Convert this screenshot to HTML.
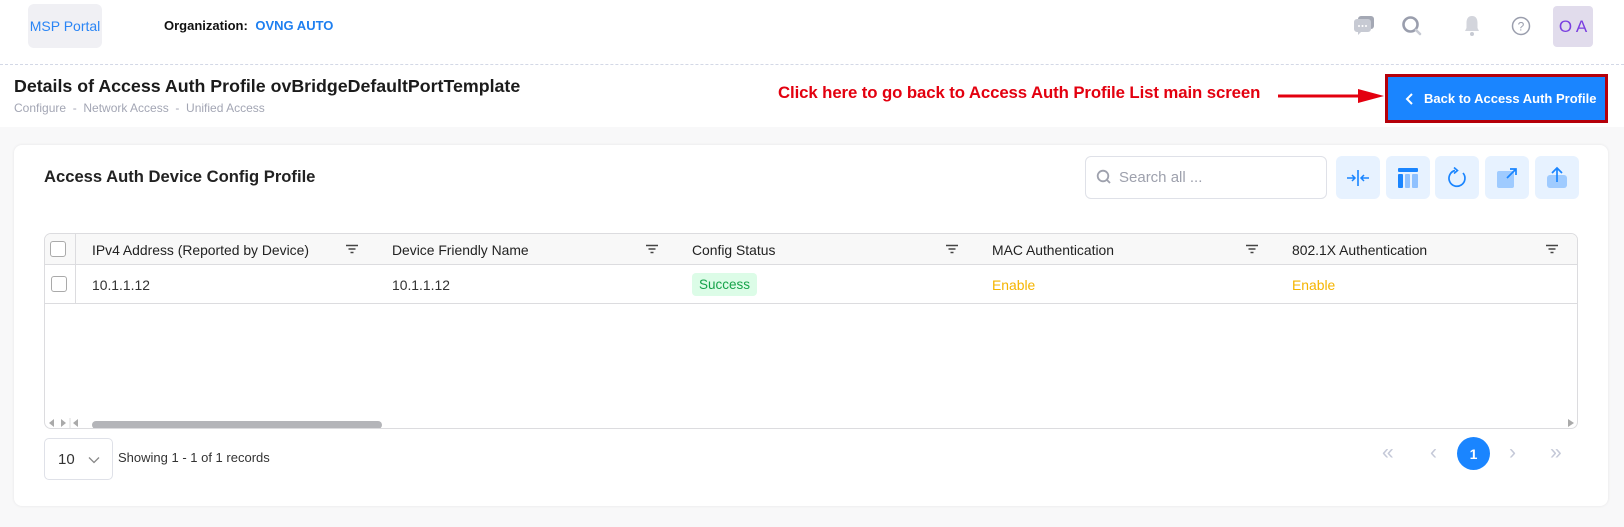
<!DOCTYPE html>
<html><head><meta charset="utf-8"><style>
*{box-sizing:border-box;margin:0;padding:0}
body{width:1624px;height:527px;background:#f8f8f9;font-family:"Liberation Sans",sans-serif;position:relative;overflow:hidden;color:#222}
.abs{position:absolute}
.top{left:0;top:0;width:1624px;height:127px;background:#fff}
.dash{left:0;top:64px;width:1624px;border-top:1px dashed #d3d8e6}
.msp{left:28px;top:4px;width:74px;height:44px;background:#f0f0f4;border-radius:6px;color:#2a85f5;font-size:14px;display:flex;align-items:center;justify-content:center}
.org{left:164px;top:18px;font-size:13px;font-weight:bold;color:#111}
.org span{color:#1e7ff0;margin-left:4px}
.title{left:14px;top:76px;font-size:17.8px;font-weight:bold;color:#1b1b1b}
.bc{left:14px;top:101px;font-size:12px;color:#a3a6b4}
.red{left:778px;top:83px;font-size:16.8px;font-weight:bold;color:#e3000f;white-space:nowrap;letter-spacing:-0.1px}
.rbox{left:1385px;top:74px;width:223px;height:49px;border:3px solid #b5000a}
.bbtn{left:1388px;top:77px;width:217px;height:43px;background:#1a85ff;color:#fff;font-size:13px;font-weight:bold;display:flex;align-items:center;padding-left:16px}
.card{left:14px;top:145px;width:1594px;height:361px;background:#fff;border-radius:8px;box-shadow:0 0 3px rgba(0,0,0,.08)}
.ctitle{left:44px;top:167px;font-size:16.6px;font-weight:bold;color:#222}
.search{left:1085px;top:156px;width:242px;height:43px;border:1px solid #dfe1e8;border-radius:6px;font-size:15px;color:#9ea1ad;padding:12px 0 0 33px}
.ib{top:156px;width:44px;height:43px;background:#e7f2ff;border-radius:6px;display:flex;align-items:center;justify-content:center}
.tbl{left:44px;top:233px;width:1534px;height:196px;border:1px solid #dcdcdf;border-radius:7px;overflow:hidden}
.thead{left:0;top:0;width:100%;height:31px;background:#f8f8f8;border-bottom:1px solid #dcdcdf}
.row{left:0;top:31px;width:100%;height:39px;border-bottom:1px solid #dcdcdf}
.cb{width:16px;height:16px;border:1px solid #aaa;border-radius:3px;background:#fff}
.vsep{left:30px;top:0;height:70px;border-left:1px solid #dcdcdf}
.th{top:8px;font-size:13.9px;color:#222}
.td{top:43px;font-size:13.9px;color:#333}
.fl{top:10px}
.badge{left:647px;top:39px;height:23px;line-height:23px;background:#dcfce7;color:#16a34a;border-radius:4px;padding:0 7px;font-size:13.5px}
.scroll{left:47px;top:187px;width:290px;height:8px;background:#b4b5b9;border-radius:4px}
.sel{left:44px;top:438px;width:69px;height:42px;border:1px solid #dfe1e8;border-radius:5px;font-size:15px;color:#333;padding:12px 0 0 13px}
.show{left:118px;top:450px;font-size:13px;color:#333}
.pg{top:441px;font-size:21px;color:#c5c9d8}
.one{left:1457px;top:437px;width:33px;height:33px;border-radius:50%;background:#1a85ff;color:#fff;font-weight:bold;font-size:14px;display:flex;align-items:center;justify-content:center}
</style></head><body>
<div class="abs top"></div>
<div class="abs dash"></div>
<div class="abs msp">MSP Portal</div>
<div class="abs org">Organization: <span>OVNG AUTO</span></div>
<svg class="abs" style="left:1352px;top:14px" width="24" height="24" viewBox="0 0 24 24"><rect x="6" y="2" width="16" height="13" rx="3" fill="#a4a8b4"/><path d="M2 8a3 3 0 0 1 3-3h11a3 3 0 0 1 3 3v7a3 3 0 0 1-3 3H9l-3 3v-3H5a3 3 0 0 1-3-3z" fill="#c7cad3"/><circle cx="7" cy="12" r="1" fill="#fff"/><circle cx="10.5" cy="12" r="1" fill="#fff"/><circle cx="14" cy="12" r="1" fill="#fff"/></svg>
<svg class="abs" style="left:1401px;top:15px" width="22" height="22" viewBox="0 0 22 22"><circle cx="9.5" cy="9.5" r="7" fill="none" stroke="#9a9ead" stroke-width="2.6"/><path d="M15 15l4 4" stroke="#c7cad3" stroke-width="2.6" stroke-linecap="round"/></svg>
<svg class="abs" style="left:1461px;top:14px" width="22" height="24" viewBox="0 0 22 24"><path d="M11 2c-4 0-5.5 3-5.5 7v5L4 17h14l-1.5-3V9c0-4-1.5-7-5.5-7z" fill="#d3d5dc"/><circle cx="11" cy="20" r="2" fill="#c7cad3"/></svg>
<svg class="abs" style="left:1511px;top:16px" width="20" height="20" viewBox="0 0 20 20"><circle cx="10" cy="10" r="8.5" fill="none" stroke="#9a9ead" stroke-width="1.5"/><text x="10" y="14.5" font-size="12" text-anchor="middle" fill="#9a9ead" font-family="Liberation Sans">?</text></svg>
<div class="abs" style="left:1553px;top:6px;width:40px;height:41px;background:#e1dcec;border-radius:4px;color:#7a3fe0;font-size:17px;display:flex;align-items:center;justify-content:center">O A</div>
<div class="abs title">Details of Access Auth Profile ovBridgeDefaultPortTemplate</div>
<div class="abs bc">Configure &nbsp;-&nbsp; Network Access &nbsp;-&nbsp; Unified Access</div>
<div class="abs red">Click here to go back to Access Auth Profile List main screen</div>
<svg class="abs" style="left:1278px;top:88px" width="108" height="16" viewBox="0 0 108 16"><path d="M0 8H82" stroke="#e3000f" stroke-width="3"/><path d="M80 1L106 8L80 15z" fill="#e3000f"/></svg>
<div class="abs rbox"></div>
<div class="abs bbtn"><svg width="12" height="14" viewBox="0 0 12 14" style="margin-right:8px"><path d="M8 2L3 7l5 5" fill="none" stroke="#fff" stroke-width="2"/></svg>Back to Access Auth Profile</div>
<div class="abs card"></div>
<div class="abs ctitle">Access Auth Device Config Profile</div>
<div class="abs search">Search all ...</div>
<svg class="abs" style="left:1096px;top:169px" width="16" height="16" viewBox="0 0 16 16"><circle cx="7" cy="7" r="5.3" fill="none" stroke="#9ea1ad" stroke-width="1.8"/><path d="M11 11l3 3" stroke="#9ea1ad" stroke-width="1.8"/></svg>
<div class="abs ib" style="left:1336px"><svg width="26" height="20" viewBox="0 0 26 20"><path d="M13 2v16" stroke="#1a85ff" stroke-width="1.6"/><path d="M2 10h8M7 7l3 3-3 3M24 10h-8M19 7l-3 3 3 3" fill="none" stroke="#1a85ff" stroke-width="1.5"/></svg></div>
<div class="abs ib" style="left:1386px"><svg width="22" height="22" viewBox="0 0 22 22"><rect x="1" y="1" width="20" height="4" rx="1" fill="#1a85ff"/><rect x="1" y="7" width="5" height="14" rx="1" fill="#1a85ff"/><rect x="8" y="7" width="5" height="14" rx="1" fill="#8fc1ff"/><rect x="15" y="7" width="6" height="14" rx="1" fill="#8fc1ff"/></svg></div>
<div class="abs ib" style="left:1435px"><svg width="22" height="22" viewBox="0 0 22 22"><path d="M17 6A8 8 0 1 1 9 3.5" fill="none" stroke="#1a85ff" stroke-width="1.7"/><path d="M8 0.5l3.5 3-3.5 3" fill="none" stroke="#1a85ff" stroke-width="1.6"/></svg></div>
<div class="abs ib" style="left:1485px"><svg width="24" height="24" viewBox="0 0 24 24"><rect x="2" y="5" width="17" height="17" rx="2" fill="#9fcbff"/><path d="M12 12L21 3M15 3h6v6" fill="none" stroke="#1a85ff" stroke-width="1.7"/></svg></div>
<div class="abs ib" style="left:1535px"><svg width="24" height="24" viewBox="0 0 24 24"><rect x="2" y="9" width="20" height="13" rx="3" fill="#9fcbff"/><path d="M12 16V2M7 7l5-5 5 5" fill="none" stroke="#1a85ff" stroke-width="1.7"/></svg></div>
<div class="abs tbl">
 <div class="abs thead"></div>
 <div class="abs row"></div>
 <div class="abs vsep"></div>
 <div class="abs cb" style="left:5px;top:7px"></div>
 <div class="abs cb" style="left:6px;top:42px"></div>
 <div class="abs th" style="left:47px">IPv4 Address (Reported by Device)</div>
 <div class="abs th" style="left:347px">Device Friendly Name</div>
 <div class="abs th" style="left:647px">Config Status</div>
 <div class="abs th" style="left:947px">MAC Authentication</div>
 <div class="abs th" style="left:1247px">802.1X Authentication</div>
 <svg class="abs fl" style="left:300px" width="14" height="10"><path d="M1 1.5h12M3.5 5h7M5.5 8.5h3" stroke="#444" stroke-width="1.6"/></svg>
 <svg class="abs fl" style="left:600px" width="14" height="10"><path d="M1 1.5h12M3.5 5h7M5.5 8.5h3" stroke="#444" stroke-width="1.6"/></svg>
 <svg class="abs fl" style="left:900px" width="14" height="10"><path d="M1 1.5h12M3.5 5h7M5.5 8.5h3" stroke="#444" stroke-width="1.6"/></svg>
 <svg class="abs fl" style="left:1200px" width="14" height="10"><path d="M1 1.5h12M3.5 5h7M5.5 8.5h3" stroke="#444" stroke-width="1.6"/></svg>
 <svg class="abs fl" style="left:1500px" width="14" height="10"><path d="M1 1.5h12M3.5 5h7M5.5 8.5h3" stroke="#444" stroke-width="1.6"/></svg>
 <div class="abs td" style="left:47px">10.1.1.12</div>
 <div class="abs td" style="left:347px">10.1.1.12</div>
 <div class="abs badge">Success</div>
 <div class="abs td" style="left:947px;color:#f5b400">Enable</div>
 <div class="abs td" style="left:1247px;color:#f5b400">Enable</div>
 <svg class="abs" style="left:3px;top:184px" width="46" height="10"><path d="M6 1v8L1 5z M13 1v8l5-4z M30 1v8l-5-4z" fill="#aaa"/><path d="M22 0v10" stroke="#ddd"/></svg>
 <div class="abs scroll"></div>
 <svg class="abs" style="left:1522px;top:184px" width="8" height="10"><path d="M1 1v8l6-4z" fill="#aaa"/></svg>
</div>
<div class="abs sel">10 <svg width="12" height="8" viewBox="0 0 12 8" style="margin-left:9px"><path d="M1 1.5l5 5 5-5" fill="none" stroke="#888" stroke-width="1.3"/></svg></div>
<div class="abs show">Showing 1 - 1 of 1 records</div>
<div class="abs pg" style="left:1382px">«</div>
<div class="abs pg" style="left:1430px">‹</div>
<div class="abs one">1</div>
<div class="abs pg" style="left:1509px">›</div>
<div class="abs pg" style="left:1550px">»</div>
</body></html>
